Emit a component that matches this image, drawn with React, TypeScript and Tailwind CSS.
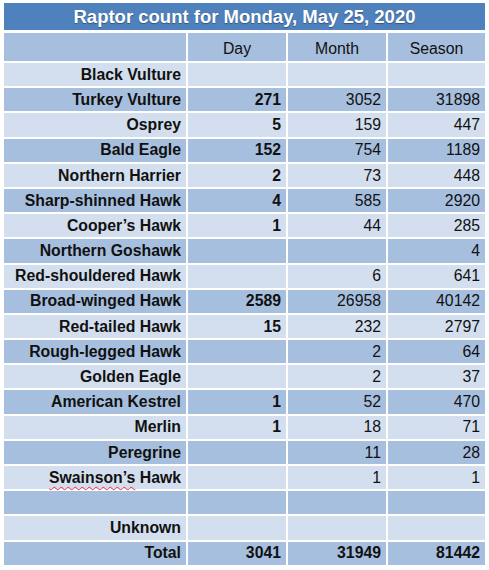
const rows: [string, string, string, string][] = [
  ["Black Vulture", "", "", ""],
  ["Turkey Vulture", "271", "3052", "31898"],
  ["Osprey", "5", "159", "447"],
  ["Bald Eagle", "152", "754", "1189"],
  ["Northern Harrier", "2", "73", "448"],
  ["Sharp-shinned Hawk", "4", "585", "2920"],
  ["Cooper’s Hawk", "1", "44", "285"],
  ["Northern Goshawk", "", "", "4"],
  ["Red-shouldered Hawk", "", "6", "641"],
  ["Broad-winged Hawk", "2589", "26958", "40142"],
  ["Red-tailed Hawk", "15", "232", "2797"],
  ["Rough-legged Hawk", "", "2", "64"],
  ["Golden Eagle", "", "2", "37"],
  ["American Kestrel", "1", "52", "470"],
  ["Merlin", "1", "18", "71"],
  ["Peregrine", "", "11", "28"],
  ["Swainson’s Hawk", "", "1", "1"],
  ["", "", "", ""],
  ["Unknown", "", "", ""],
  ["Total", "3041", "31949", "81442"],
];

export default function App() {
  return (
    <div className="min-h-[570px] w-[489px] bg-white pl-[4px] pt-[3px] text-[#111] [font-family:'Liberation_Sans',Arial,sans-serif]">
      <div className="flex h-[27px] w-[481px] items-center justify-center bg-[#4f81bd] text-[18.5px] font-bold text-white [text-shadow:0_1px_1px_rgba(0,0,0,0.35)]">
        Raptor count for Monday, May 25, 2020
      </div>
      <div className="mt-[3px] grid w-[481px] grid-cols-[182px_98px_98px_97px] gap-[2px] text-[15.8px]">
        <div className="h-[28px] bg-[#a7bfde]" />
        <div className="flex h-[28px] items-end justify-center bg-[#a7bfde] pb-[4px] leading-none">Day</div>
        <div className="flex h-[28px] items-end justify-center bg-[#a7bfde] pb-[4px] leading-none">Month</div>
        <div className="flex h-[28px] items-end justify-center bg-[#a7bfde] pb-[4px] leading-none">Season</div>
        {rows.map((r, i) => {
          const bg = i % 2 === 0 ? "bg-[#d3dfee]" : "bg-[#a7bfde]";
          const isTotal = r[0] === "Total";
          return [
            <div
              key={`${i}-name`}
              className={`flex h-[23.2px] items-center justify-end pr-[5px] font-bold ${bg}`}
            >
              {r[0].startsWith("Swainson") ? (
                <>
                  <span className="underline decoration-red-500 decoration-wavy decoration-1 underline-offset-[3px]">
                    Swainson’s
                  </span>
                  &nbsp;Hawk
                </>
              ) : (
                r[0]
              )}
            </div>,
            <div
              key={`${i}-day`}
              className={`flex h-[23.2px] items-center justify-end pr-[5px] font-bold ${bg}`}
            >
              {r[1]}
            </div>,
            <div
              key={`${i}-month`}
              className={`flex h-[23.2px] items-center justify-end pr-[5px] ${isTotal ? "font-bold" : ""} ${bg}`}
            >
              {r[2]}
            </div>,
            <div
              key={`${i}-season`}
              className={`flex h-[23.2px] items-center justify-end pr-[5px] ${isTotal ? "font-bold" : ""} ${bg}`}
            >
              {r[3]}
            </div>,
          ];
        })}
      </div>
    </div>
  );
}
